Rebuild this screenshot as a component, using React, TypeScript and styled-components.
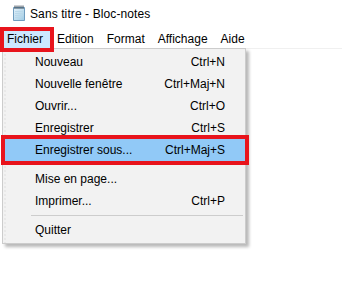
import React from "react";
import styled, { createGlobalStyle } from "styled-components";

const Global = createGlobalStyle`
  html, body { margin: 0; padding: 0; background: #ffffff; }
  body { font-family: "Segoe UI", "Liberation Sans", Arial, sans-serif; font-size: 12px; color: #000; }
  #root { width: 342px; height: 302px; overflow: hidden; }
`;

const Window = styled.div`
  position: relative;
  width: 342px;
  height: 302px;
  background: #ffffff;
`;

const TitleBar = styled.div`
  display: flex;
  align-items: center;
  height: 26px;
  padding-left: 11px;
  gap: 3px;
  margin-bottom: 5px;
`;

const TitleText = styled.span`
  font-size: 12px;
  line-height: 16px;
  padding-top: 1px;
  letter-spacing: 0.1px;
`;

const MenuBar = styled.div`
  display: flex;
  align-items: stretch;
  height: 17px;
  padding-left: 4px;
  border-bottom: 1px solid #f0f0f0;
`;

const BarItem = styled.div<{ $active?: boolean; $first?: boolean }>`
  display: flex;
  align-items: center;
  padding: ${(p) => (p.$first ? "0 7px 0 3px" : "0 6px 0 7px")};
  font-size: 12px;
  line-height: 17px;
  background: ${(p) => (p.$active ? "#cce8ff" : "transparent")};
  box-shadow: ${(p) => (p.$active ? "0 0 0 4px #e8141c" : "none")};
  position: relative;
  z-index: ${(p) => (p.$active ? 2 : 0)};
`;

const Dropdown = styled.div`
  position: absolute;
  left: 2px;
  top: 48px;
  width: 240px;
  padding: 2px 0 2px 2px;
  background-color: #f2f2f2;
  background-image: radial-gradient(circle, #e4e4e4 0.6px, transparent 0.9px);
  background-size: 4px 4px;
  background-repeat: repeat-y;
  border: 1px solid #cccccc;
  box-shadow: 3px 3px 3px rgba(0, 0, 0, 0.28);
  z-index: 1;
`;

const MenuList = styled.div`
  display: flex;
  flex-direction: column;
  background: linear-gradient(to right, transparent 0 26px, #f2f2f2 26px);
`;

const Row = styled.div<{ $active?: boolean }>`
  display: flex;
  align-items: center;
  justify-content: space-between;
  height: 22px;
  padding: 0 20px 0 30px;
  font-size: 12px;
  background: ${(p) => (p.$active ? "#91c9f7" : "transparent")};
  box-shadow: ${(p) => (p.$active ? "0 0 0 4px #e8141c" : "none")};
  position: relative;
  z-index: ${(p) => (p.$active ? 2 : 0)};
`;

const Shortcut = styled.span`
  font-size: 12px;
`;

const Separator = styled.div`
  height: 7px;
  display: flex;
  align-items: center;
  padding: 0 2px 0 26px;
  &::after {
    content: "";
    display: block;
    flex: 1;
    height: 1px;
    background: #cdcdcd;
  }
`;

const NotepadIcon = () => (
  <svg width="16" height="17" viewBox="0 0 16 17">
    <defs>
      <linearGradient id="pg" x1="0" y1="0" x2="1" y2="1">
        <stop offset="0" stopColor="#e6f3fb" />
        <stop offset="1" stopColor="#9fcbe4" />
      </linearGradient>
    </defs>
    <path d="M2.5 2.5 H13.5 V15.5 H2.5 Z" fill="url(#pg)" stroke="#6f9cbf" strokeWidth="1" />
    <path d="M4 6.5 H12 M4 8.5 H12 M4 10.5 H12 M4 12.5 H10" stroke="#b9d8ea" strokeWidth="1" />
    {[4, 6, 8, 10, 12].map((x) => (
      <rect key={x} x={x - 0.5} y={0.5} width="1" height="3.5" fill="#3d4a57" />
    ))}
  </svg>
);

type Item = { label: string; shortcut?: string; active?: boolean } | "sep";

const items: Item[] = [
  { label: "Nouveau", shortcut: "Ctrl+N" },
  { label: "Nouvelle fenêtre", shortcut: "Ctrl+Maj+N" },
  { label: "Ouvrir...", shortcut: "Ctrl+O" },
  { label: "Enregistrer", shortcut: "Ctrl+S" },
  { label: "Enregistrer sous...", shortcut: "Ctrl+Maj+S", active: true },
  "sep",
  { label: "Mise en page..." },
  { label: "Imprimer...", shortcut: "Ctrl+P" },
  "sep",
  { label: "Quitter" },
];

export default function App() {
  return (
    <Window>
      <Global />
      <TitleBar>
        <NotepadIcon />
        <TitleText>Sans titre - Bloc-notes</TitleText>
      </TitleBar>
      <MenuBar>
        <BarItem $active $first>Fichier</BarItem>
        <BarItem>Edition</BarItem>
        <BarItem>Format</BarItem>
        <BarItem>Affichage</BarItem>
        <BarItem>Aide</BarItem>
      </MenuBar>
      <Dropdown>
        <MenuList>
          {items.map((it, i) =>
            it === "sep" ? (
              <Separator key={i} />
            ) : (
              <Row key={i} $active={it.active}>
                <span>{it.label}</span>
                {it.shortcut && <Shortcut>{it.shortcut}</Shortcut>}
              </Row>
            )
          )}
        </MenuList>
      </Dropdown>
    </Window>
  );
}
